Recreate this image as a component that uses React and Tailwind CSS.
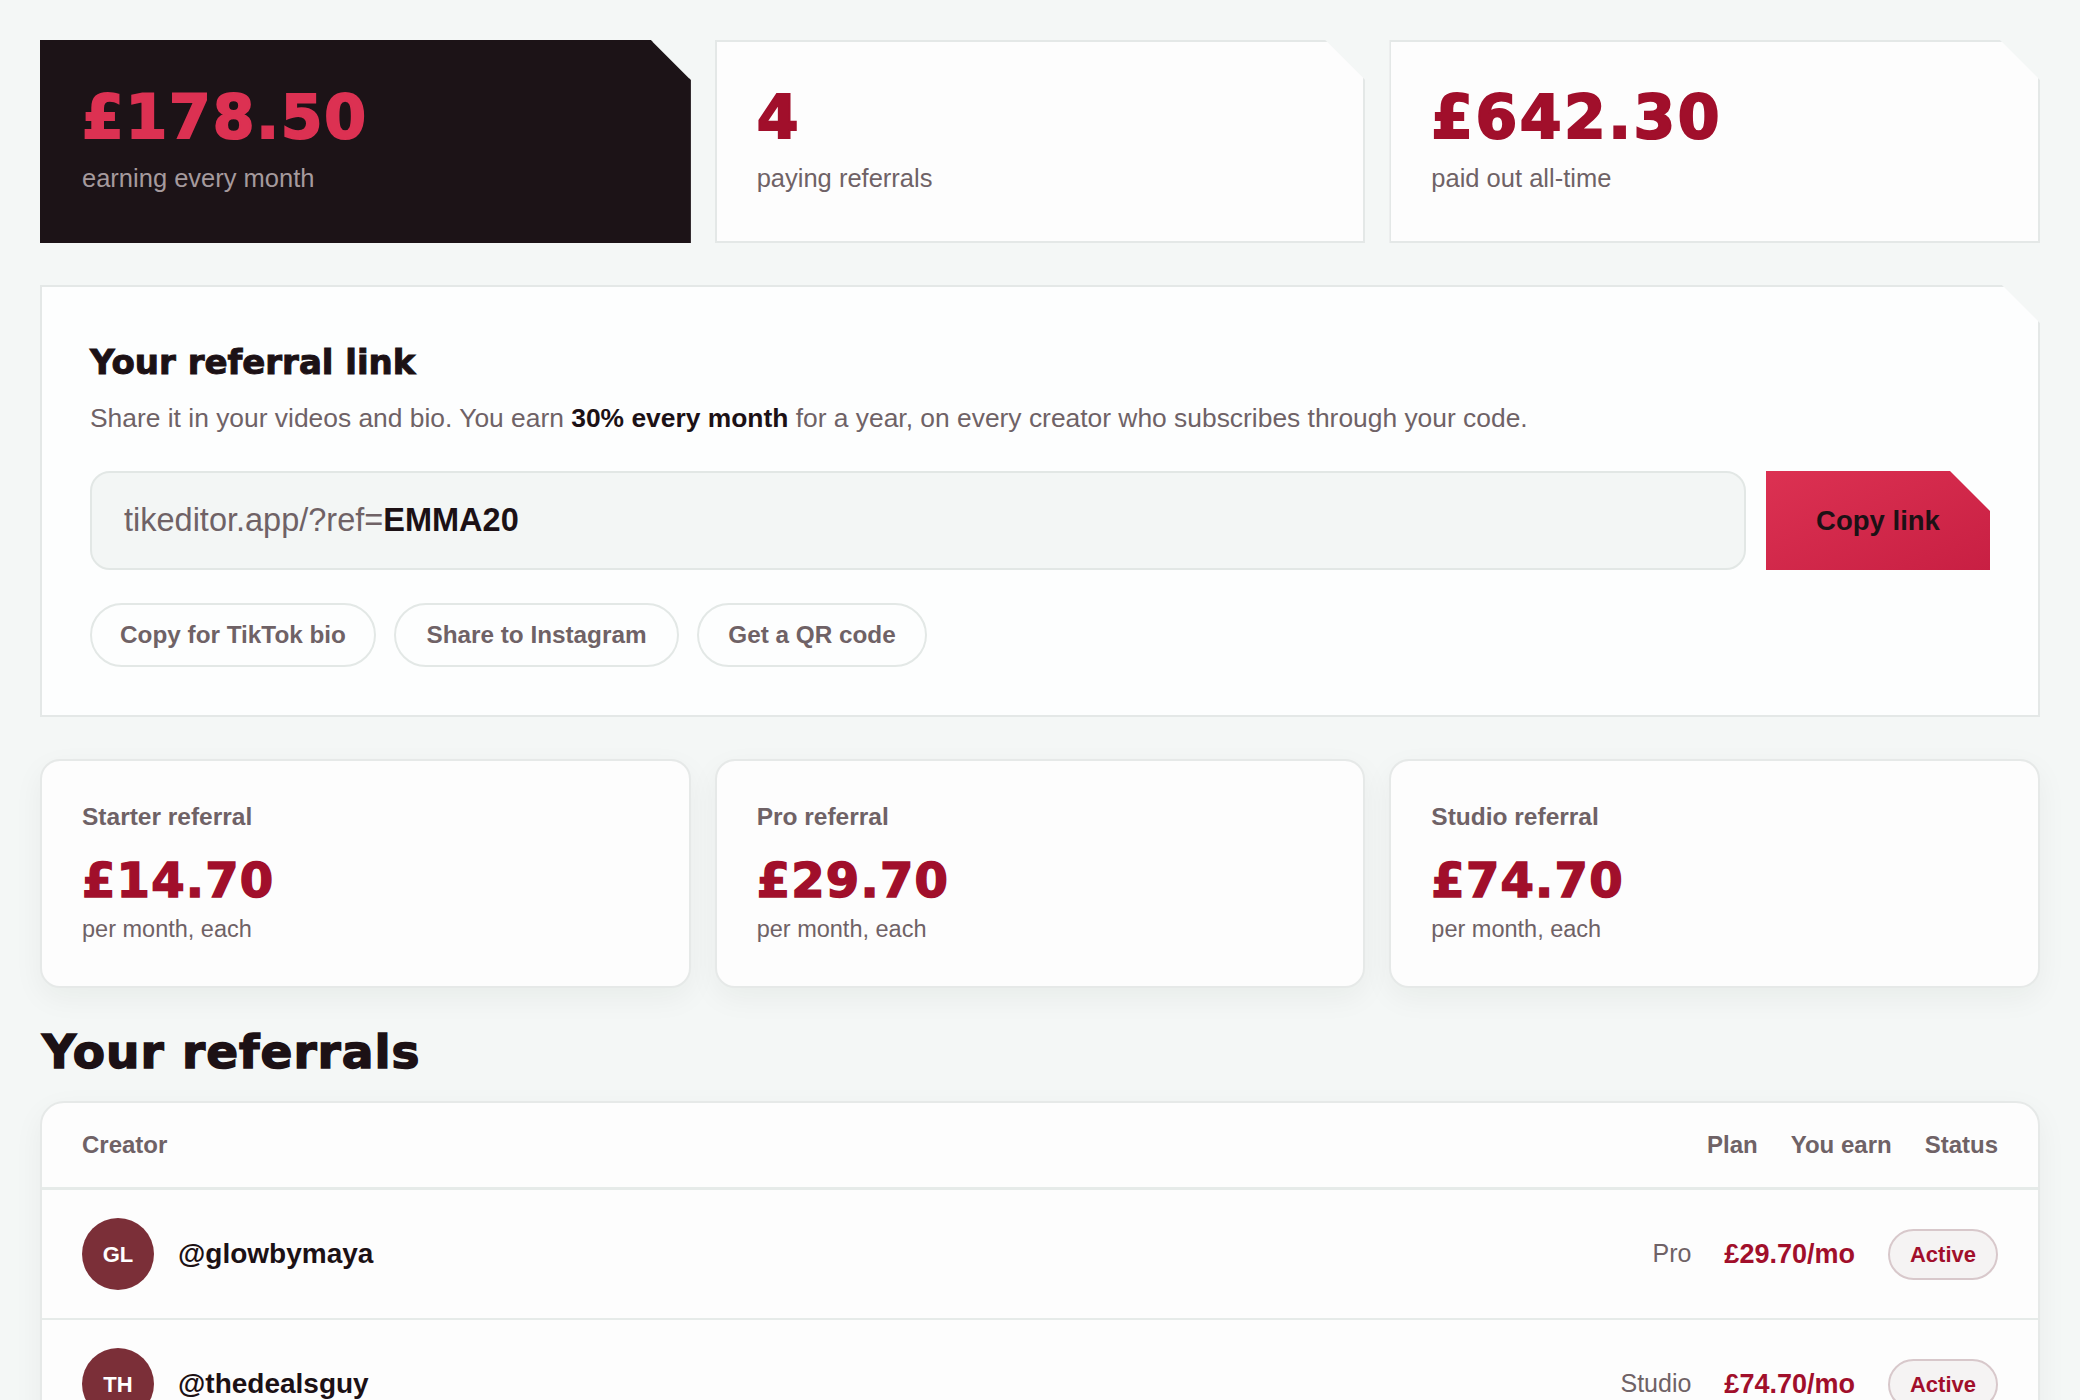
export default function App() {
  const tiers = [
    { name: "Starter referral", amount: "£14.70" },
    { name: "Pro referral", amount: "£29.70" },
    { name: "Studio referral", amount: "£74.70" },
  ];
  const rows = [
    { initials: "GL", handle: "@glowbymaya", plan: "Pro", earn: "£29.70/mo" },
    { initials: "TH", handle: "@thedealsguy", plan: "Studio", earn: "£74.70/mo" },
    { initials: "LE", handle: "@lenaskincare", plan: "Pro", earn: "£29.70/mo" },
    { initials: "JO", handle: "@studiobyjo", plan: "Pro", earn: "£29.70/mo" },
  ];
  const shareBtn =
    "flex h-[64px] items-center justify-center rounded-full border-2 border-[#e3e8e6] bg-[#fdfefe] text-[24.3px] font-bold text-[#6f6266]";

  return (
    <div className="min-h-screen bg-[#f4f7f6] px-10 pt-10 pb-10 font-['Liberation_Sans',Arial,sans-serif]">
      {/* Stat cards */}
      <div className="grid grid-cols-3 gap-6">
        <div className="h-[203px] border-2 border-[#1c1317] bg-[#1c1317] px-10 pt-[45px] [clip-path:polygon(0_0,calc(100%-40px)_0,100%_40px,100%_100%,0_100%)]">
          <div className="font-['DejaVu_Sans',sans-serif] text-[60px] font-bold leading-none tracking-[1.8px] text-[#dc3152] [-webkit-text-stroke:2px_currentColor]">£178.50</div>
          <div className="mt-[15px] text-[25.5px] leading-[32px] text-[#a59a9d]">earning every month</div>
        </div>
        <div className="h-[203px] border-2 border-[#e4e8e7] bg-[#fdfdfd] px-10 pt-[45px] [clip-path:polygon(0_0,calc(100%-40px)_0,100%_40px,100%_100%,0_100%)]">
          <div className="font-['DejaVu_Sans',sans-serif] text-[60px] font-bold leading-none tracking-[1.8px] text-[#a10f2b] [-webkit-text-stroke:2px_currentColor]">4</div>
          <div className="mt-[15px] text-[25.5px] leading-[32px] text-[#6f6266]">paying referrals</div>
        </div>
        <div className="h-[203px] border-2 border-[#e4e8e7] bg-[#fdfdfd] px-10 pt-[45px] [clip-path:polygon(0_0,calc(100%-40px)_0,100%_40px,100%_100%,0_100%)]">
          <div className="font-['DejaVu_Sans',sans-serif] text-[60px] font-bold leading-none tracking-[2.5px] text-[#a10f2b] [-webkit-text-stroke:2px_currentColor]">£642.30</div>
          <div className="mt-[15px] text-[25.5px] leading-[32px] text-[#6f6266]">paid out all-time</div>
        </div>
      </div>

      {/* Referral link */}
      <section className="mt-[42px] border-2 border-[#e4e8e7] bg-[#fdfefe] px-12 pt-[58px] pb-12 [clip-path:polygon(0_0,calc(100%-38px)_0,100%_38px,100%_100%,0_100%)]">
        <h2 className="font-['DejaVu_Sans',sans-serif] text-[34px] font-bold leading-none text-[#1c1115] [-webkit-text-stroke:1px_currentColor]">Your referral link</h2>
        <p className="mt-[21px] text-[26.4px] leading-[36px] text-[#6f6266]">
          Share it in your videos and bio. You earn <strong className="font-bold text-[#1c1115]">30% every month</strong> for a year, on every creator who subscribes through your code.
        </p>
        <div className="mt-[35px] flex gap-5">
          <div className="flex h-[99px] flex-1 items-center rounded-[20px] border-2 border-[#e2e7e5] bg-[#f3f6f5] px-8 text-[32.5px] text-[#6f6266]">
            tikeditor.app/?ref=<span className="font-bold text-[#1c1115]">EMMA20</span>
          </div>
          <button className="h-[99px] w-[224px] bg-linear-to-br from-[#dc3152] to-[#c81f43] text-[27.5px] font-bold text-[#1c1115] [clip-path:polygon(0_0,calc(100%-40px)_0,100%_40px,100%_100%,0_100%)]">
            Copy link
          </button>
        </div>
        <div className="mt-[33px] flex gap-[18px]">
          <button className={shareBtn + " w-[286px]"}>Copy for TikTok bio</button>
          <button className={shareBtn + " w-[285px]"}>Share to Instagram</button>
          <button className={shareBtn + " w-[230px]"}>Get a QR code</button>
        </div>
      </section>

      {/* Tier cards */}
      <div className="mt-[42px] grid grid-cols-3 gap-6">
        {tiers.map((t) => (
          <div key={t.name} className="h-[229px] rounded-[20px] border-2 border-[#e6e9e8] bg-[#fdfdfd] px-10 pt-[41px] shadow-[0_10px_30px_rgba(20,30,25,0.05)]">
            <div className="text-[24.5px] font-bold leading-[30px] text-[#6f6266]">{t.name}</div>
            <div className="mt-[24px] font-['DejaVu_Sans',sans-serif] text-[48px] font-bold leading-none tracking-[1.2px] text-[#a10f2b] [-webkit-text-stroke:1.5px_currentColor]">{t.amount}</div>
            <div className="mt-[10px] text-[23.5px] leading-[30px] text-[#6f6266]">per month, each</div>
          </div>
        ))}
      </div>

      {/* Referrals */}
      <h2 className="mt-[40px] pl-[2px] font-['DejaVu_Sans',sans-serif] text-[47px] font-bold leading-none tracking-[1px] text-[#1c1115] [-webkit-text-stroke:1.5px_currentColor]">Your referrals</h2>
      <div className="mt-[26px] rounded-t-[24px] border-2 border-[#e6e9e8] bg-[#fdfdfd] shadow-[0_10px_30px_rgba(20,30,25,0.05)]">
        <div className="flex justify-between border-b-[3px] border-[#e6ebe9] px-10 py-6 text-[24px] font-bold leading-[36px] text-[#6f6266]">
          <span>Creator</span>
          <div className="flex gap-[33px]">
            <span>Plan</span>
            <span>You earn</span>
            <span>Status</span>
          </div>
        </div>
        {rows.map((r) => (
          <div key={r.handle} className="flex items-center justify-between border-b-2 border-[#e6ebe9] px-10 py-7">
            <div className="flex items-center gap-6">
              <div className="flex h-[72px] w-[72px] items-center justify-center rounded-full bg-[#7b2f38] text-[22px] font-bold text-white">{r.initials}</div>
              <span className="text-[28px] font-bold text-[#1c1115]">{r.handle}</span>
            </div>
            <div className="flex items-center gap-[33px]">
              <span className="text-[25px] text-[#6f6266]">{r.plan}</span>
              <span className="text-[27px] font-bold text-[#a10f2b]">{r.earn}</span>
              <span className="flex h-[51px] items-center rounded-full border-2 border-[#d8c8cb] bg-[#f5f3f3] px-[20px] text-[22px] font-bold text-[#a10f2b]">Active</span>
            </div>
          </div>
        ))}
      </div>
    </div>
  );
}
